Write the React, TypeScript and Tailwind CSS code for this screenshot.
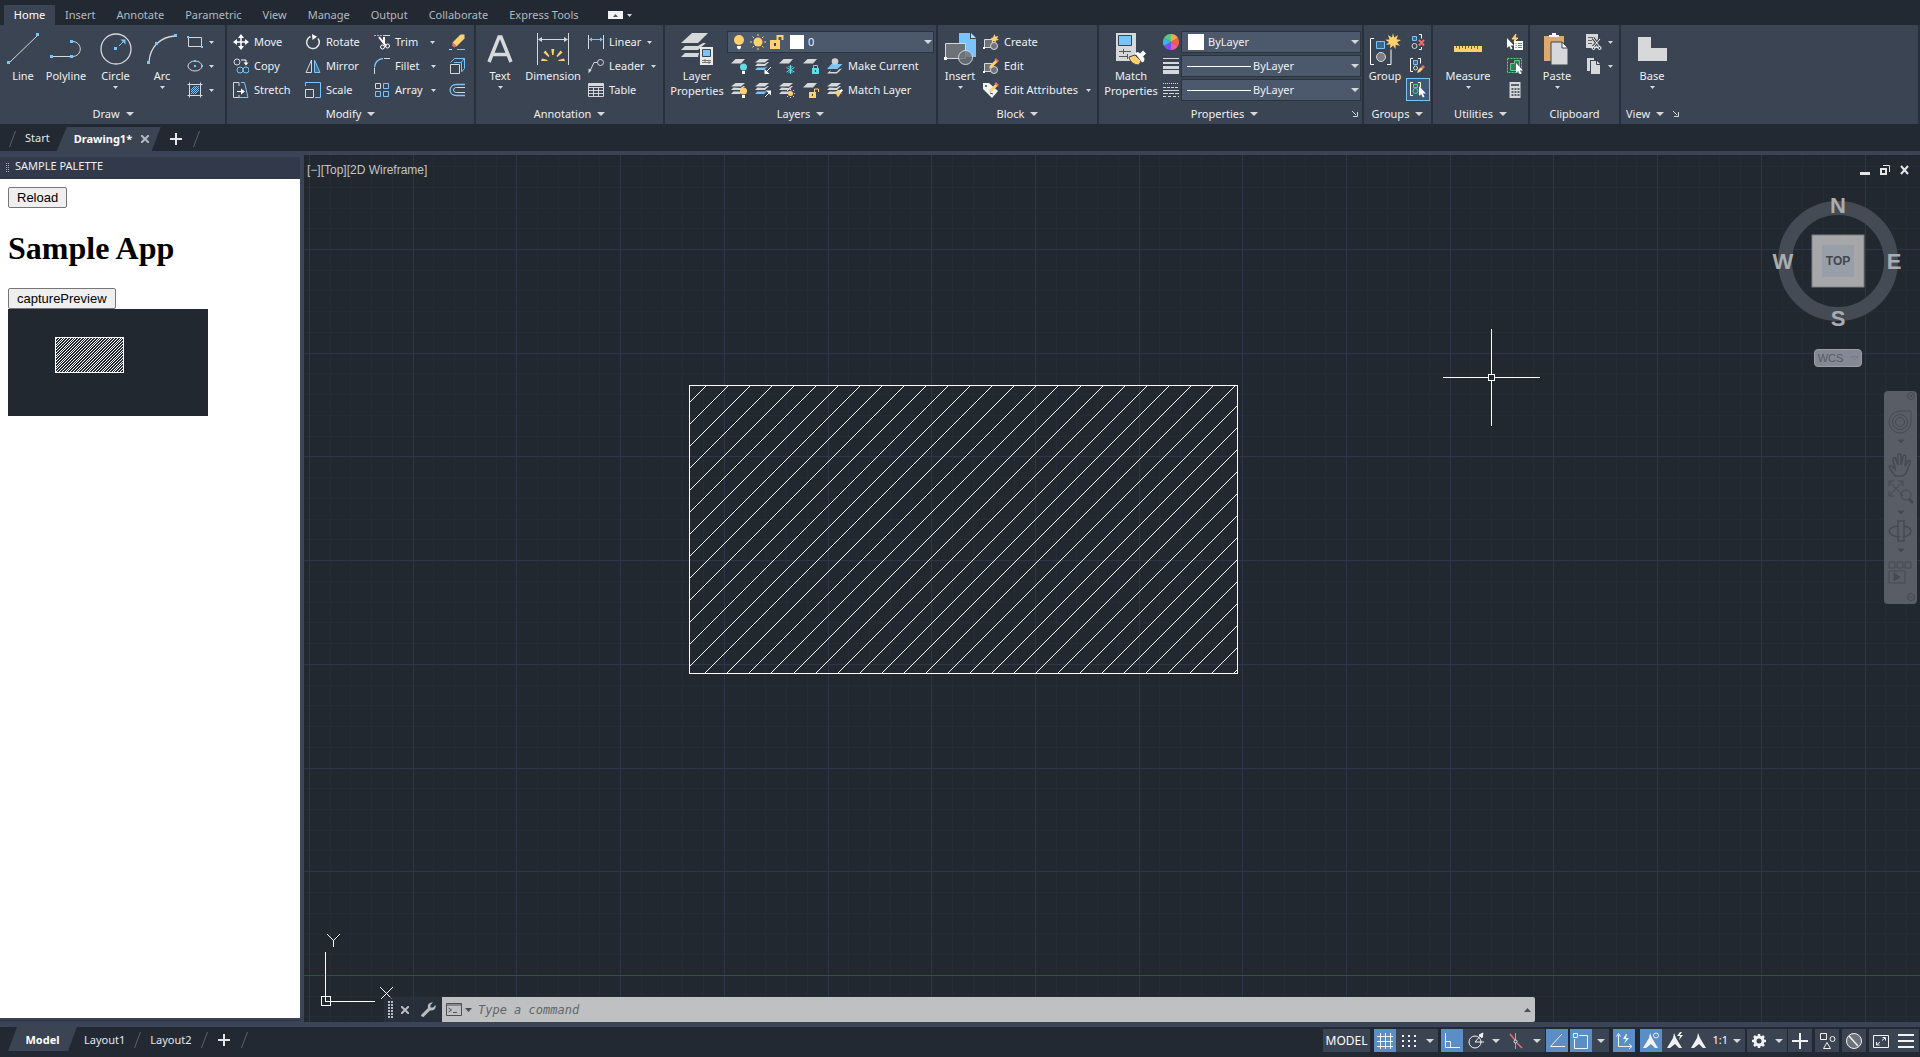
import React, { ReactNode } from "react";

const G = "#d6d8da";
const B = "#78c4fb";
const Y = "#ffd070";
const R = "#f26a6a";
const D = "#3b4453";

function Ic({ s = 16, children }: { s?: 16 | 32; children: ReactNode }) {
  return (
    <svg
      className="shrink-0"
      width={s}
      height={s}
      viewBox={s === 32 ? "0 0 32 32" : "0 0 16 16"}
      fill="none"
      stroke={G}
      aria-hidden="true"
    >
      {children}
    </svg>
  );
}

function Caret({ big = false }: { big?: boolean }) {
  return big ? (
    <svg className="shrink-0" width="8" height="4" viewBox="0 0 8 4" aria-hidden="true">
      <path d="M0 0h8L4 4z" fill={G} />
    </svg>
  ) : (
    <svg className="shrink-0" width="5" height="3" viewBox="0 0 5 3" aria-hidden="true">
      <path d="M0 0h5L2.500 3z" fill={G} />
    </svg>
  );
}

function Sq({ x, y, s = 3, c = B }: { x: number; y: number; s?: number; c?: string }) {
  return <rect x={x} y={y} width={s} height={s} fill={c} stroke="none" />;
}

/* ---------- draw icons ---------- */
const LineIcon = () => (
  <Ic s={32}>
    <path d="M2 30 31 2" />
    <Sq x={0} y={28} /> <Sq x={29} y={0} />
  </Ic>
);
const PolylineIcon = () => (
  <Ic s={32}>
    <path d="M2 23.500h20M22 8.500c11 0 11 15 0 15" />
    <Sq x={0} y={22} /> <Sq x={20} y={22} /> <Sq x={20} y={7} />
  </Ic>
);
const CircleIcon = () => (
  <Ic s={32}>
    <circle cx="16" cy="16" r="15" strokeWidth="1.300" />
    <path d="M19 13l4-4" stroke={B} />
    <path d="M25.500 6.500v5l-5-5z" fill={B} stroke="none" />
    <Sq x={14} y={14} />
  </Ic>
);
const ArcIcon = () => (
  <Ic s={32}>
    <path d="M3 29C4 14 14 4 29 3" strokeWidth="1.300" />
    <Sq x={1} y={28} /> <Sq x={9} y={9} /> <Sq x={28} y={1} />
  </Ic>
);
const RectIcon = () => (
  <Ic>
    <path d="M1.500 3.500h13v9h-13z" />
    <Sq x={0} y={2} s={2} /> <Sq x={14} y={12} s={2} />
  </Ic>
);
const EllipseIcon = () => (
  <Ic>
    <ellipse cx="8" cy="8" rx="7" ry="5" />
    <Sq x={7} y={7} s={2} /> <Sq x={7} y={2} s={2} /> <Sq x={14} y={7} s={2} />
  </Ic>
);
const HatchIcon = () => (
  <Ic>
    <path d="M.5 2.500h15M.5 13.500h15M2.500.5v15M13.500.5v15" />
    <path d="M4 8l4-4M4 12l8-8M8 12l4-4M4 10l6-6M6 12l6-6" stroke={B} />
  </Ic>
);

/* ---------- modify icons ---------- */
const MoveIcon = () => (
  <Ic>
    <path d="M8 2v12M2 8h12" strokeWidth="1.500" stroke="#fff" />
    <path d="M8 0l3 4H5zM8 16l3-4H5zM0 8l4-3v6zM16 8l-4-3v6z" fill="#fff" stroke="none" />
  </Ic>
);
const CopyIcon = () => (
  <Ic>
    <circle cx="4" cy="4" r="3" />
    <path d="M8 2h5v3" stroke="#fff" />
    <path d="M10.500 4.500h5l-2.500 3z" fill="#fff" stroke="none" />
    <circle cx="7" cy="12" r="3" stroke={B} />
    <circle cx="13" cy="12" r="3" stroke={B} />
  </Ic>
);
const StretchIcon = () => (
  <Ic>
    <path d="M6 4V.5H.5v15H6V13" />
    <path d="M8 .5h3.500l3.500 15H6" stroke={B} />
    <path d="M4 9.500h6" stroke="#fff" />
    <path d="M8 6.500l4 3-4 3z" fill="#fff" stroke="none" />
  </Ic>
);
const RotateIcon = () => (
  <Ic>
    <path d="M5.500 2.500A6.300 6.300 0 1 0 13 4.500" stroke="#e8e8e8" strokeWidth="1.500" />
    <path d="M7 0l5 2.800L7.500 6z" fill="#fff" stroke="none" />
  </Ic>
);
const MirrorIcon = () => (
  <Ic>
    <path d="M6.500 2v12.500H1z" />
    <path d="M9.500 2v12.500H15z" stroke={B} fill="#3f6f98" />
  </Ic>
);
const ScaleIcon = () => (
  <Ic>
    <path d="M3 .5h12.500v15H10M.5 4V.5H3" stroke={B} />
    <path d="M.5 7.500h8v8h-8z" />
  </Ic>
);
const TrimIcon = () => (
  <Ic>
    <path d="M0 1.500h8" stroke={B} strokeDasharray="2 1" />
    <path d="M9 1.500h7" />
    <path d="M5 3l7 9M10 3v7" stroke="#fff" strokeWidth="2" />
    <circle cx="8.500" cy="13" r="2" stroke="#fff" />
    <circle cx="13.500" cy="12" r="2" stroke="#fff" />
  </Ic>
);
const FilletIcon = () => (
  <Ic>
    <path d="M.5 9.500C1 4 4 1 9 .5" stroke={B} strokeWidth="1.300" />
    <path d="M10 .5h6M.5 10v6" />
  </Ic>
);
const ArrayIcon = () => (
  <Ic>
    <path d="M1.500 1.500h5v5h-5z" />
    <path d="M9.500 1.500h5v5h-5zM1.500 9.500h5v5h-5zM9.500 9.500h5v5h-5z" stroke={B} />
  </Ic>
);
const EraseIcon = () => (
  <Ic>
    <path d="M15.500.5v4l-8 8-4-4 8-8z" fill={Y} stroke="none" />
    <path d="M4 9l3 3c-1.500 2-4.500 0-3-3z" fill={R} stroke={R} />
    <path d="M0 15.500h3" />
    <path d="M8 15.500h8" stroke={B} />
  </Ic>
);
const ExplodeIcon = () => (
  <Ic>
    <path d="M1.500 6.500h9v9h-9z" />
    <path d="M1.500 4.500l4-4h10v10l-3 3.500M12.500 4l3-3.500M5 4.500h7.500v9" stroke={B} />
  </Ic>
);
const OffsetIcon = () => (
  <Ic>
    <path d="M16 2.500H7.500c-8.500 0-8.500 11 0 11H16" stroke={B} strokeWidth="1.300" />
    <path d="M16 5.500H7.500c-4 0-4 5 0 5H16" />
  </Ic>
);

/* ---------- annotation icons ---------- */
const TextIcon = () => (
  <Ic s={32}>
    <path d="M5 29 15 4h2l10 25M8 21.500h16" strokeWidth="3.500" />
  </Ic>
);
const DimensionIcon = () => (
  <Ic s={32}>
    <path d="M.5 0v32M31.500 0v32M3 6.500h26" />
    <path d="M1 6.500l4-2.500v5zM31 6.500L27 4v5z" fill={G} stroke="none" />
    <path
      d="M14.300 16h3l-.8 6h-1.400zM6.500 19.500l2-2 4 5.500-1 1zM25.500 19.500l-2-2-4 5.500 1 1zM4 28l1-2.500 5.500 1.500v1zM28 28l-1-2.500-5.500 1.500v1z"
      fill={Y}
      stroke="none"
    />
  </Ic>
);
const LinearIcon = () => (
  <Ic>
    <path d="M.5 1v14M15.500 1v14" />
    <path d="M2 5.500h12" stroke={B} />
    <path d="M1 5.500l3-2v4zM15 5.500l-3-2v4z" fill={B} stroke="none" />
  </Ic>
);
const LeaderIcon = () => (
  <Ic>
    <circle cx="12.500" cy="4.500" r="3" />
    <path d="M9.500 4.500H6L1.500 14" />
    <path d="M.5 15.500v-5l3 1.500z" fill={G} stroke="none" />
  </Ic>
);
const TableIcon = () => (
  <Ic>
    <path d="M.5 1.500h15v13H.5zM.5 5.500h15M.5 8.500h15M.5 11.500h15M5.500 5v9M10.500 5v9" />
    <path d="M1 2h14v2H1z" fill={G} stroke="none" />
  </Ic>
);

/* ---------- layer icons ---------- */
const LayerPropsIcon = () => (
  <Ic s={32}>
    <path d="M11 0h16L17 10H0zM4 13l-4 4h17l8-7h-3l-5 3zM4 20l-4 4h17l1-4z" fill={G} stroke="none" />
    <path d="M19 14h13v18H19z" fill="#e9e9e9" stroke="none" />
    <path d="M21.500 16.500h8v7h-8z" fill={B} stroke={D} />
    <path d="M21 27.500h9M21 29.500h9M24 26v3M28 28v3" stroke="#777" />
  </Ic>
);
const Sheets = ({ mid = G }: { mid?: string }) => (
  <>
    <path d="M4.500 1H14l-4 3.500H0z" fill={G} stroke="none" />
    <path d="M2.500 5.500 0 8h10l4-4h-1.500L9.500 6z" fill={G} stroke="none" />
    <path d="M2.500 9.500 0 12h9l4-4-3 1.500z" fill={mid} stroke="none" />
  </>
);
const OneSheet = () => <path d="M4.500 1H14l-4 4.500H0z" fill={G} stroke="none" />;
const Bulb = ({ c }: { c: string }) => (
  <>
    <circle cx="12.500" cy="9" r="3.500" fill={c} stroke="none" />
    <path d="M11 13h3v3h-3z" fill="#fff" stroke="none" />
  </>
);
const LayOff = () => <Ic><OneSheet /><Bulb c="#62dbe8" /></Ic>;
const LayIso = () => (
  <Ic><Sheets mid={B} /><path d="M16 9l-5 5" stroke="#fff" /><path d="M9.500 11v5h5z" fill="#fff" stroke="none" /></Ic>
);
const LayFreeze = () => (
  <Ic><OneSheet /><path d="M11.500 7v9M7.500 9.500l8 4.500M15.500 9.500l-8 4.500M9.500 8l2 2 2-2M9.500 15l2-2 2 2" stroke="#62dbe8" /></Ic>
);
const LayLock = () => (
  <Ic><OneSheet /><path d="M9 10h7v6H9z" fill="#62dbe8" stroke="none" /><path d="M10.500 10V7.500h4V10" stroke="#62dbe8" /><path d="M12.500 12v2" stroke={D} /></Ic>
);
const MakeCurrent = () => (
  <Ic>
    <path d="M4 12l-4 3.500h10l5-5-2.500.5-3 3H3z" fill={G} stroke="none" />
    <path d="M4.500 6H15.500l-5 5H0z" fill={B} stroke="none" />
    <circle cx="8" cy="3.500" r="3.300" fill="#cfcfcf" stroke="none" />
  </Ic>
);
const LayOn = () => <Ic><Sheets /><Bulb c={Y} /></Ic>;
const LayUniso = () => (
  <Ic><Sheets mid={B} /><path d="M10 15l4-4" stroke="#fff" /><path d="M11 8.500h5v5z" fill="#fff" stroke="none" /></Ic>
);
const LayThaw = () => (
  <Ic><Sheets /><circle cx="11.500" cy="11.500" r="2.500" fill={Y} stroke="none" /><path d="M11.500 6.500V8M11.500 15v1.500M6.500 11.500H8M15 11.500h1.500M8 8l1 1M15 8l-1 1M8 15l1-1M15 15l-1-1" stroke={Y} /></Ic>
);
const LayUnlock = () => (
  <Ic><OneSheet /><path d="M6 10h7v6H6z" fill={Y} stroke="none" /><path d="M11.500 10V7h4v3" stroke={Y} /><path d="M9.500 12v2" stroke={D} /></Ic>
);
const MatchLayer = () => (
  <Ic><Sheets /><path d="M8 10l3-2 3 3-3 4.500z" fill={Y} stroke="none" /><path d="M10.500 7.500l2 1 2-1.500 1.500 1.500-2 2 1 2z" fill="#fff" stroke="none" /></Ic>
);
const BulbIcon = () => (
  <Ic><circle cx="8" cy="6" r="5" fill={Y} stroke="none" /><path d="M6 12h4v2l-2 1.500L6 14z" fill="#fff" stroke="none" /></Ic>
);
const SunIcon = () => (
  <Ic><circle cx="8" cy="8" r="4.500" fill={Y} stroke="none" /><path d="M8 0v2M8 14v2M0 8h2M14 8h2M2.500 2.500L4 4M13.500 2.500L12 4M2.500 13.500L4 12M13.500 13.500L12 12" stroke={Y} /></Ic>
);
const UnlockIcon = () => (
  <Ic><path d="M1 6h10v9H1z" fill={Y} stroke="none" /><path d="M8.500 6V2h5v4" stroke={Y} strokeWidth="2" /><path d="M6 9v3" stroke={D} strokeWidth="2" /></Ic>
);

/* ---------- block icons ---------- */
const InsertIcon = () => (
  <Ic s={32}>
    <path d="M15 0h11v6h6v18H15z" fill={B} stroke="none" />
    <path d="M27 0l5 5h-5z" fill="#b5defc" stroke="none" />
    <path d="M1.500 10.500h20v15h-20z" fill="#6d7278" />
    <circle cx="21.500" cy="24.500" r="7" fill="#6d7278" fillOpacity=".8" />
    <Sq x={0} y={24} c="#fff" />
  </Ic>
);
const BlockBase = () => (
  <>
    <path d="M1.500 5.500h8v8h-8z" fill="#6d7278" />
    <circle cx="11" cy="12" r="3.500" fill="#6d7278" />
    <Sq x={0} y={13} s={2} c="#fff" />
  </>
);
const Pencil = () => (
  <>
    <path d="M13 1.500l2 2-6 6-3 1 1-3z" fill={Y} stroke="none" />
    <path d="M13 0l3 3-1.500 1.500-3-3z" fill={R} stroke="none" />
  </>
);
const CreateIcon = () => (
  <Ic><BlockBase /><path d="M11.500 0l1 2.800 3-1-1.500 2.700 2 1.500-3 .5-.5 2.500-1.500-2-2.500 1 1-2.500-2-1.500 2.500-.5z" fill={Y} stroke="none" /></Ic>
);
const EditIcon = () => <Ic><BlockBase /><Pencil /></Ic>;
const AttrIcon = () => (
  <Ic><path d="M0 1h6l9 8-6 7-9-9z" fill="#f2f2f2" stroke="none" /><circle cx="3" cy="4" r="1" fill={D} stroke="none" /><path d="M7 11l3 1" stroke={D} /><Pencil /></Ic>
);

/* ---------- property icons ---------- */
const MatchPropsIcon = () => (
  <Ic s={32}>
    <path d="M1 0h20v28H1z" fill={G} stroke="none" />
    <path d="M3.500 2.500h13v10h-13z" fill={B} stroke={D} />
    <path d="M4 18.500h12M4 23.500h9M8.500 16v5M12.500 21v5" stroke="#555" />
    <path d="M14 24l6-2 6 6-2 4c-5 0-9-3-10-8z" fill={Y} stroke={D} />
    <path d="M20 20l3-1 2 1.500 3-3 3 3-3 3 1.500 2-.5 3-2 1z" fill="#fff" stroke="none" />
  </Ic>
);
const WheelIcon = () => (
  <Ic>
    <g stroke="none">
      <path d="M8 8V0a8 8 0 0 1 7 4z" fill="#f8a54c" />
      <path d="M8 8l7-4a8 8 0 0 1 0 8z" fill="#f0604d" />
      <path d="M8 8l7 4a8 8 0 0 1-7 4z" fill="#ef5a9a" />
      <path d="M8 8v8a8 8 0 0 1-7-4z" fill="#7c4dff" />
      <path d="M8 8l-7 4a8 8 0 0 1 0-8z" fill="#3bb3e8" />
      <path d="M8 8L1 4a8 8 0 0 1 7-4z" fill="#58c97a" />
    </g>
  </Ic>
);
const WeightIcon = () => (
  <Ic><path d="M0 .5h16" /><path d="M0 5h16" strokeWidth="2" /><path d="M0 9.500h16" strokeWidth="3" /><path d="M0 14h16" strokeWidth="4" /></Ic>
);
const TypeIcon = () => (
  <Ic>
    <path d="M0 1.500h16" strokeDasharray="1 1" />
    <path d="M0 5.500h16" strokeDasharray="3 1" />
    <path d="M0 8.500h16" />
    <path d="M0 11.500h16" strokeDasharray="5 1" />
    <path d="M0 14.500h16" strokeDasharray="3 2" />
  </Ic>
);

/* ---------- group icons ---------- */
const Star = () => (
  <path d="M24 0l1.200 4.500L29 2l-1.500 4.200 4.500.8-4 2.300 3 3.500-4.300-1L26.500 16 24 12.500 21 15.500l.3-4.200L17 12l3-3-4-2.200 4.500-.3L19 2l4 2.500z" fill={Y} stroke="none" />
);
const GroupIcon = () => (
  <Ic s={32}>
    <path d="M5 5.500H1.500v26H5M18 31.500h4v-15" stroke="#fff" />
    <path d="M7.500 8.500h8v7h-8z" stroke={B} fill="#40668a" />
    <circle cx="12" cy="24" r="4.500" fill="#7b7f85" />
    <Star />
  </Ic>
);
const Cursor = ({ x, y }: { x: number; y: number }) => (
  <path d={`M${x} ${y}v10l2.200-2 1.600 3.500 1.700-.8-1.600-3.300h3z`} fill="#fff" stroke="none" />
);
const UngroupIcon = () => (
  <Ic><path d="M2.500 2.500h4v4h-4z" stroke={B} fill="#40668a" /><circle cx="4.500" cy="12" r="2.500" /><path d="M9 .5h2.500v4M9 15.500h2.500V13" stroke="#fff" /><path d="M9 6l5 5.500M14 6l-5 5.500" stroke={R} strokeWidth="2" /></Ic>
);
const GroupEditIcon = () => (
  <Ic><path d="M3 .5H.5v13H3M8 .5h2.500v5" stroke="#fff" /><path d="M3.500 2.500h4v4h-4z" stroke={B} fill="#40668a" /><circle cx="5.500" cy="10" r="2" /><path d="M7 15l1-3 3-3 2 2-3 3z" fill={Y} stroke="none" /><path d="M11 9l2-2 2 2-2 2z" fill={R} stroke="none" /></Ic>
);
const GroupSelIcon = () => (
  <Ic><path d="M3 .5H.5v13H3M8 .5h2.500v5" stroke="#fff" /><path d="M3.500 2.500h4v3h-4z" stroke="#53d68a" /><circle cx="5.500" cy="9" r="2.500" stroke="#53d68a" /><Cursor x={9} y={4} /></Ic>
);

/* ---------- utilities, clipboard, view ---------- */
const RulerIcon = () => (
  <Ic s={32}><path d="M2 13h28v6H2z" fill={Y} stroke="none" /><path d="M4.500 13v2M7.500 13v3M10.500 13v2M13.500 13v3M16.500 13v2M19.500 13v3M22.500 13v2M25.500 13v3" stroke="#6f6545" /></Ic>
);
const QuickSelIcon = () => (
  <Ic><path d="M9 0L5 5h3l-1 3 4-4H8z" fill={Y} stroke={Y} /><Cursor x={0} y={4} /><path d="M7 7h9v9H7z" fill="#fff" stroke="none" /><path d="M8.500 9.500h1M8.500 11.500h1M8.500 13.500h1M11 9.500h4M11 11.500h4M11 13.500h4" stroke="#3988cc" /></Ic>
);
const SelAllIcon = () => (
  <Ic><path d="M.5.5h14v14H.5z" stroke="#53d68a" strokeDasharray="2 1" /><path d="M3.500 5.500h4v-3h5v7h-3v3h-6z" stroke="#53d68a" fill="#3d7a5c" /><Cursor x={9} y={5} /></Ic>
);
const CalcIcon = () => (
  <Ic><path d="M2.500 0h11v16h-11z" fill={G} stroke="none" /><path d="M5.500 6v9M8.500 6v9M11.500 6v9" stroke="#5a606a" strokeWidth="2" strokeDasharray="2 1" /><path d="M4 3h8" stroke="#5a606a" strokeWidth="2" /></Ic>
);
const PasteIcon = () => (
  <Ic s={32}><path d="M3 3h20v25H3z" fill="#dcaa6c" stroke="none" /><path d="M8 4V2h3V0h4v2h3v2z" fill="#fff" stroke="none" /><path d="M10 9h11l6 6v17H10z" fill={G} stroke={D} /><path d="M21 9v6h6z" fill="#fff" stroke={D} /></Ic>
);
const CutIcon = () => (
  <Ic><path d="M0 0h12v14H0z" fill={G} stroke="none" /><path d="M2 3.500h5M2 6.500h4M2 9.500h4" stroke="#666" /><path d="M7 4l7 9M14 5l-7 8" stroke={D} strokeWidth="3" /><path d="M7 4l7 9M14 5l-7 8" stroke="#fff" /><circle cx="7.500" cy="14" r="1.500" stroke="#fff" /><circle cx="13.500" cy="14" r="1.500" stroke="#fff" /></Ic>
);
const CopyClipIcon = () => (
  <Ic><path d="M1 0h7v2H4v11H1z" fill={G} stroke="none" /><path d="M5 3h6l3 3v10H5z" fill={G} stroke="none" /><path d="M10.500 3v3.500H14" stroke={D} /></Ic>
);
const BaseIcon = () => <Ic s={32}><path d="M2 4h13v11h16v13H2z" fill={G} stroke="none" /></Ic>;

/* ---------- ribbon building blocks ---------- */
function Panel({ title, width, children, caret = true, launcher = false, left = false }: {
  title: string; width: string; children: ReactNode; caret?: boolean; launcher?: boolean; left?: boolean;
}) {
  return (
    <section className={`flex flex-col border-r-2 border-[#28303b] pt-[5px] ${width}`}>
      <div className="flex h-[74px]">{children}</div>
      <div className={`relative flex h-5 items-center ${left ? "pl-[5px]" : launcher ? "justify-center pr-3" : "justify-center"}`}>
        <button type="button" className="flex items-center gap-[6px]">
          {title}
          {caret && <Caret big />}
        </button>
        {launcher && (
          <button
            type="button"
            aria-label={`${title} settings`}
            className={left ? "ml-[9px]" : "absolute right-1"}
          >
            <svg width="6" height="6" viewBox="0 0 6 6" aria-hidden="true">
              <path d="M0 0l4 4" stroke={G} />
              <path d="M5.500 1v4.500H1" stroke={G} fill="none" />
            </svg>
          </button>
        )}
      </div>
    </section>
  );
}

function Big({ icon, label, width, caret = false }: { icon: ReactNode; label: string; width: string; caret?: boolean }) {
  return (
    <button type="button" className={`flex shrink-0 flex-col items-center pt-[3px] ${width}`}>
      {icon}
      <span className="mt-[3px] text-center leading-[15px] whitespace-pre">{label}</span>
      {caret && <span className="mt-[3px]"><Caret /></span>}
    </button>
  );
}

function Row({ icon, label, gap = "ml-3" }: { icon: ReactNode; label: string; gap?: string }) {
  const hasCaret = gap !== "none";
  return (
    <button type="button" className="flex h-6 items-center whitespace-nowrap">
      {icon}
      <span className="ml-[5px]">{label}</span>
      {hasCaret && <span className={gap}><Caret /></span>}
    </button>
  );
}

function IconBtn({ icon, label, caret = false }: { icon: ReactNode; label: string; caret?: boolean }) {
  return (
    <button type="button" aria-label={label} className="flex h-6 items-center gap-[6px]">
      {icon}
      {caret && <Caret />}
    </button>
  );
}

function Combo({ label, value, pre }: { label: string; value: string; pre?: ReactNode }) {
  return (
    <div className="relative flex h-[22px] w-full items-center border border-[#2b333f] bg-[#4c586b]">
      {pre}
      <select aria-label={label} defaultValue={value} className="h-full min-w-0 flex-1 appearance-none bg-transparent pr-5 outline-none">
        <option>{value}</option>
      </select>
      <span className="pointer-events-none absolute right-[1px] flex"><Caret big /></span>
    </div>
  );
}

const LinePreview = () => <span className="mr-[2px] ml-[5px] h-px w-16 bg-white" />;

function Ribbon() {
  return (
    <div className="flex h-[99px] shrink-0 bg-[#3b4453] pl-[1px] text-[#eef0f2]">
      <Panel title="Draw" width="w-[226px]">
        <div className="flex pl-[2px]">
          <Big icon={<LineIcon />} label="Line" width="w-10" />
          <Big icon={<PolylineIcon />} label="Polyline" width="w-[46px]" />
          <Big icon={<CircleIcon />} label="Circle" width="w-[53px]" caret />
          <Big icon={<ArcIcon />} label="Arc" width="w-[40px]" caret />
        </div>
        <div className="ml-[5px]">
          <IconBtn icon={<RectIcon />} label="Rectangle" caret />
          <IconBtn icon={<EllipseIcon />} label="Ellipse" caret />
          <IconBtn icon={<HatchIcon />} label="Hatch" caret />
        </div>
      </Panel>

      <Panel title="Modify" width="w-[249px]">
        <div className="w-[78px] pl-[6px]">
          <Row icon={<MoveIcon />} label="Move" gap="none" />
          <Row icon={<CopyIcon />} label="Copy" gap="none" />
          <Row icon={<StretchIcon />} label="Stretch" gap="none" />
        </div>
        <div className="w-[69px]">
          <Row icon={<RotateIcon />} label="Rotate" gap="none" />
          <Row icon={<MirrorIcon />} label="Mirror" gap="none" />
          <Row icon={<ScaleIcon />} label="Scale" gap="none" />
        </div>
        <div className="w-[75px]">
          <Row icon={<TrimIcon />} label="Trim" />
          <Row icon={<FilletIcon />} label="Fillet" />
          <Row icon={<ArrayIcon />} label="Array" gap="ml-2" />
        </div>
        <div>
          <IconBtn icon={<EraseIcon />} label="Erase" />
          <IconBtn icon={<ExplodeIcon />} label="Explode" />
          <IconBtn icon={<OffsetIcon />} label="Offset" />
        </div>
      </Panel>

      <Panel title="Annotation" width="w-[189px]">
        <Big icon={<TextIcon />} label="Text" width="w-12" caret />
        <Big icon={<DimensionIcon />} label="Dimension" width="w-[58px]" />
        <div className="ml-[6px]">
          <Row icon={<LinearIcon />} label="Linear" gap="ml-[6px]" />
          <Row icon={<LeaderIcon />} label="Leader" gap="ml-[6px]" />
          <Row icon={<TableIcon />} label="Table" gap="none" />
        </div>
      </Panel>

      <Panel title="Layers" width="w-[273px]">
        <Big icon={<LayerPropsIcon />} label={"Layer\nProperties"} width="w-[62px] pl-[2px]" />
        <div className="flex-1 pr-[2px]">
          <div className="flex h-6 items-center">
            <Combo
              label="Current layer"
              value="0"
              pre={
                <span className="mr-1 flex items-center gap-[3px] pl-[3px]">
                  <BulbIcon /><SunIcon /><UnlockIcon />
                  <span className="ml-[2px] size-[14px] bg-white" />
                </span>
              }
            />
          </div>
          <div className="flex gap-2 pl-1">
            <IconBtn icon={<LayOff />} label="Layer off" />
            <IconBtn icon={<LayIso />} label="Isolate layer" />
            <IconBtn icon={<LayFreeze />} label="Freeze layer" />
            <IconBtn icon={<LayLock />} label="Lock layer" />
            <Row icon={<MakeCurrent />} label="Make Current" gap="none" />
          </div>
          <div className="flex gap-2 pl-1">
            <IconBtn icon={<LayOn />} label="All layers on" />
            <IconBtn icon={<LayUniso />} label="Unisolate layer" />
            <IconBtn icon={<LayThaw />} label="Thaw layers" />
            <IconBtn icon={<LayUnlock />} label="Unlock layer" />
            <Row icon={<MatchLayer />} label="Match Layer" gap="none" />
          </div>
        </div>
      </Panel>

      <Panel title="Block" width="w-[161px]">
        <Big icon={<InsertIcon />} label="Insert" width="w-[44px]" caret />
        <div className="ml-[1px]">
          <Row icon={<CreateIcon />} label="Create" gap="none" />
          <Row icon={<EditIcon />} label="Edit" gap="none" />
          <Row icon={<AttrIcon />} label="Edit Attributes" gap="ml-2" />
        </div>
      </Panel>

      <Panel title="Properties" width="w-[265px]" launcher>
        <Big icon={<MatchPropsIcon />} label={"Match\nProperties"} width="w-16" />
        <div className="grid h-[72px] flex-1 grid-cols-[16px_1fr] items-center gap-x-[2px] pr-[1px]">
          <WheelIcon />
          <Combo label="Object colour" value="ByLayer" pre={<span className="mr-1 ml-[6px] size-4 bg-white" />} />
          <WeightIcon />
          <Combo label="Lineweight" value="ByLayer" pre={<LinePreview />} />
          <TypeIcon />
          <Combo label="Linetype" value="ByLayer" pre={<LinePreview />} />
        </div>
      </Panel>

      <Panel title="Groups" width="w-[69px]">
        <Big icon={<GroupIcon />} label="Group" width="w-[42px]" />
        <div className="w-6">
          <span className="flex justify-center"><IconBtn icon={<UngroupIcon />} label="Ungroup" /></span>
          <span className="flex justify-center"><IconBtn icon={<GroupEditIcon />} label="Group edit" /></span>
          <button type="button" aria-label="Group selection" className="flex h-[23px] w-6 items-center justify-center border border-[#78c4fb] bg-[#3e5a78]">
            <GroupSelIcon />
          </button>
        </div>
      </Panel>

      <Panel title="Utilities" width="w-[97px]">
        <Big icon={<RulerIcon />} label="Measure" width="w-[70px]" caret />
        <div className="ml-1">
          <IconBtn icon={<QuickSelIcon />} label="Quick select" />
          <IconBtn icon={<SelAllIcon />} label="Select all" />
          <IconBtn icon={<CalcIcon />} label="Calculator" />
        </div>
      </Panel>

      <Panel title="Clipboard" width="w-[91px]" caret={false}>
        <Big icon={<PasteIcon />} label="Paste" width="w-[54px]" caret />
        <div className="ml-[2px]">
          <IconBtn icon={<CutIcon />} label="Cut" caret />
          <IconBtn icon={<CopyClipIcon />} label="Copy clip" caret />
        </div>
      </Panel>

      <Panel title="View" width="flex-1" launcher left>
        <Big icon={<BaseIcon />} label="Base" width="w-[62px]" caret />
      </Panel>
    </div>
  );
}

function MenuTabs() {
  const tabs = ["Insert", "Annotate", "Parametric", "View", "Manage", "Output", "Collaborate", "Express Tools"];
  return (
    <nav className="flex h-[25px] shrink-0 items-end pl-1 text-[#b4b9c0]">
      <button type="button" className="h-5 w-[51px] bg-[#3b4453] text-white">Home</button>
      <div className="ml-[10px] flex h-5 gap-[21px]">
        {tabs.map((t) => (
          <button key={t} type="button" className="whitespace-nowrap">{t}</button>
        ))}
      </div>
      <button type="button" aria-label="Ribbon display" className="ml-[29px] flex h-5 items-center gap-1">
        <svg width="15" height="8" viewBox="0 0 15 8" aria-hidden="true">
          <path d="M0 0h15v8H0z" fill="#f2f2f2" />
          <path d="M5 6l2.500-3L10 6z" fill="#555" />
        </svg>
        <Caret />
      </button>
    </nav>
  );
}

const Slash = () => (
  <svg className="shrink-0" width="7" height="16" viewBox="0 0 7 16" aria-hidden="true">
    <path d="M.5 16 6.500 0" stroke="#5a626e" />
  </svg>
);
const Plus = () => (
  <svg width="12" height="12" viewBox="0 0 12 12" aria-hidden="true">
    <path d="M6 0v12M0 6h12" stroke="#e6e6e6" strokeWidth="2" />
  </svg>
);

function FileTabs() {
  return (
    <div className="flex h-[27px] shrink-0 items-center pt-[2px] pl-[9px] text-[#e4e6e8]">
      <Slash />
      <button type="button" className="ml-[9px]">Start</button>
      <div className="relative ml-[7px] flex h-6 w-[104px] items-center self-end pl-[17px]">
        <span className="absolute inset-0 bg-[#3b4453] [clip-path:polygon(10px_0,100%_0,calc(100%-9px)_100%,0_100%)]" />
        <button type="button" className="relative font-bold text-white">Drawing1*</button>
        <button type="button" aria-label="Close drawing" className="absolute right-[12px]">
          <svg width="8" height="8" viewBox="0 0 8 8" aria-hidden="true"><path d="M0 0l8 8M8 0L0 8" stroke="#b4b9c0" strokeWidth="2" /></svg>
        </button>
      </div>
      <button type="button" aria-label="New drawing" className="ml-[9px]"><Plus /></button>
      <span className="ml-[11px]"><Slash /></span>
    </div>
  );
}

function HatchLines({ x, y, w, h, first, step }: { x: number; y: number; w: number; h: number; first: number; step: number }) {
  const segs: string[] = [];
  for (let v = first; v < w + h; v += step) {
    const s = Math.round(v);
    const x1 = s < h ? 0 : s - h;
    const y1 = s < h ? s : h;
    const x2 = s < w ? s : w;
    const y2 = s < w ? 0 : s - w;
    segs.push(`M${x + x1} ${y + y1}L${x + x2} ${y + y2}`);
  }
  return <path d={segs.join("")} />;
}

function Palette() {
  const btn = "rounded-[2px] border border-[#767676] bg-[#efefef] h-[21px] px-2 text-[13px] text-black font-['Liberation_Sans',Arial,sans-serif]";
  return (
    <aside className="flex w-[300px] shrink-0 flex-col">
      <div className="mt-[2px] flex h-[22px] items-center gap-[6px] rounded-tr-[3px] bg-[#31394a] pb-1 pl-[6px] text-[#eef0f2]">
        <svg className="mt-[2px]" width="3" height="9" viewBox="0 0 3 9" aria-hidden="true">
          <path d="M.5 0v9M2.500 0v9" stroke="#a8adb5" strokeDasharray="1 1" />
        </svg>
        SAMPLE PALETTE
      </div>
      <div className="flex flex-1 flex-col items-start bg-white p-2">
        <button type="button" className={btn}>Reload</button>
        <h1 className="my-[21px] font-['Liberation_Serif','Times_New_Roman',serif] text-[32px] leading-[38px] font-bold text-black">Sample App</h1>
        <button type="button" className={btn}>capturePreview</button>
        <svg width="200" height="107" viewBox="0 0 200 107" role="img" aria-label="Drawing preview" shapeRendering="crispEdges">
          <path d="M0 0h200v107H0z" fill="#21282f" />
          <g stroke="#fff" fill="none">
            <rect x="47.500" y="28.500" width="68" height="35" />
            <HatchLines x={47.5} y={28.5} w={68} h={35} first={2} step={2.77} />
          </g>
        </svg>
      </div>
      <div className="h-[9px] border-t-2 border-[#3b4456] pb-[6px]"><div className="h-px bg-[#2b3340]" /></div>
    </aside>
  );
}

const GRID = 103.7;

function DrawingArea() {
  const minor: string[] = [];
  const major: string[] = [];
  for (let k = -2; k < 160; k++) {
    const x = Math.round(5 + (k * GRID) / 5) + 0.5;
    (k % 5 === 0 ? major : minor).push(`M${x} 0V3000`);
  }
  for (let k = 0; k < 110; k++) {
    const y = Math.round(94 - GRID + (k * GRID) / 5) + 0.5;
    (k % 5 === 0 ? major : minor).push(`M0 ${y}H4000`);
  }
  return (
    <svg className="absolute inset-0 h-full w-full" shapeRendering="crispEdges" fill="none" role="img" aria-label="Model space">
      <path d={minor.join("")} stroke="#252c37" />
      <path d={major.join("")} stroke="#2f364a" />
      <path d="M0 820.500H4000" stroke="#8e2430" />
      <g stroke="#fff">
        <rect x="385.500" y="230.500" width="548" height="288" />
        <HatchLines x={385.5} y={230.5} w={548} h={288} first={17} step={22.03} />
        <path d="M1139 222.500h45M1191 222.500h45M1187.500 174v45M1187.500 226v45" />
        <rect x="1184.500" y="219.500" width="6" height="6" />
        <path d="M21.500 797v50M21 846.500h50M17.500 841.500h9v9h-9z" />
        <path d="M23.500 779.500l6 6 6-6M29.500 786v6M76.500 832.500l12 12M88.500 832.500l-12 12" />
      </g>
    </svg>
  );
}

function ViewCube() {
  return (
    <div className="absolute top-[32px] right-[16px] flex w-[132px] flex-col items-center">
      <svg width="132" height="150" viewBox="0 -6 132 150" role="img" aria-label="View cube">
        <circle cx="66" cy="68" r="53" fill="none" stroke="#454b54" strokeWidth="14" />
        <rect x="40" y="42" width="52" height="52" fill="#a5a7a9" stroke="#7c8085" />
        <rect x="50" y="52" width="32" height="32" fill="#999fa8" />
        <g className="font-['Liberation_Sans',Arial,sans-serif] font-bold" textAnchor="middle" fill="#a9adb0">
          <text x="66" y="72" fontSize="12" fill="#42474e">TOP</text>
          <text x="66" y="20" fontSize="22">N</text>
          <text x="66" y="133" fontSize="22">S</text>
          <text x="11" y="76" fontSize="22">W</text>
          <text x="122" y="76" fontSize="22">E</text>
        </g>
      </svg>
      <button type="button" className="mt-3 flex h-[18px] w-12 items-center justify-center gap-2 rounded-[4px] border border-[#9a9da6] bg-[#858994] text-[11px] text-[#555a66] font-['Liberation_Sans',Arial,sans-serif]">
        WCS
        <svg width="7" height="4" viewBox="0 0 7 4" fill="none" aria-hidden="true"><path d="M0 .5h7L3.500 3.500z" stroke="#777c88" /></svg>
      </button>
    </div>
  );
}

function NavBar() {
  return (
    <div className="absolute top-[236px] right-[3px] h-[213px] w-[33px] rounded-[4px] bg-[#585d66]">
      <svg width="33" height="213" viewBox="0 0 33 213" fill="none" stroke="#454a52" role="img" aria-label="Navigation tools">
        <circle cx="27" cy="5" r="3.500" /><path d="M25.500 3.500l3 3M28.500 3.500l-3 3" />
        <path d="M16 20h11v11a11 11 0 1 1-11-11z" /><circle cx="16" cy="31" r="7.500" /><circle cx="16" cy="31" r="4.500" />
        <path d="M14 49h6l-3 3z" fill="#454a52" />
        <path d="M11 85l-5-7c-2-4 1-4 3-2l2 2-2-9c0-3 3-3 3 0l2 5V65c0-3 3-3 3 0v9l2-8c1-3 3-2 3 0l-1 9 3-5c2-2 3 0 2 2l-4 10-3 3z" strokeWidth="1.500" />
        <path d="M5 90l14 15M19 90L5 105M5 95v-5h5M14 90h5v5M5 100v5h5" />
        <circle cx="22" cy="104" r="5" /><path d="M25 108l4 4" strokeWidth="2.500" />
        <path d="M14 120h6l-3 3z" fill="#454a52" />
        <path d="M14 130h6v20h-6zM14 135c-12 1-12 10 2 11M20 135c10 2 9 9-1 11" strokeWidth="1.500" />
        <path d="M14 158h6l-3 3z" fill="#454a52" />
        <path d="M5 171h6v6H5zM13 171h6v6h-6zM21 171h6v6h-6zM5 180h16v12H5z" />
        <path d="M10 182l6 4-6 4z" fill="#454a52" />
        <circle cx="27" cy="206" r="3.500" /><path d="M25 206h4" />
      </svg>
    </div>
  );
}

function CommandBar() {
  return (
    <div className="absolute right-[385px] bottom-0 left-[80px] flex h-[25px]">
      <div className="flex w-[58px] items-center bg-[#2b323f]/70 pl-1">
        <svg width="5" height="17" viewBox="0 0 5 17" aria-hidden="true"><path d="M1 0v17M4 0v17" stroke="#b8bbc0" strokeWidth="2" strokeDasharray="2 1" /></svg>
        <button type="button" aria-label="Close command line" className="ml-[8px]">
          <svg width="8" height="8" viewBox="0 0 8 8" aria-hidden="true"><path d="M0 0l8 8M8 0L0 8" stroke="#b8bbc0" strokeWidth="2" /></svg>
        </button>
        <button type="button" aria-label="Customize" className="ml-[12px]">
          <svg width="15" height="15" viewBox="0 0 15 15" aria-hidden="true">
            <path d="M0 13l7-7C6 3 8 0 12 .5L9.500 3v2.500H12L14.500 3c1 4-2 6-5.500 5.500l-6.500 6.500C1 15 0 14 0 13z" fill="#b8bbc0" />
          </svg>
        </button>
      </div>
      <div className="flex flex-1 items-center rounded-r-[2px] bg-[#bfc0c2] pr-[4px] pl-1">
        <button type="button" aria-label="Recent commands" className="flex items-center gap-[3px]">
          <svg width="16" height="13" viewBox="0 0 16 13" fill="none" stroke="#4b4e52" aria-hidden="true">
            <path d="M.5.5h15v12H.5zM.5 2h15" /><path d="M2.500 5l3 2-3 2M7 9.500h4" />
          </svg>
          <svg width="7" height="4" viewBox="0 0 7 4" aria-hidden="true"><path d="M0 0h7L3.500 4z" fill="#4b4e52" /></svg>
        </button>
        <input
          aria-label="Command"
          placeholder="Type a command"
          className="ml-[6px] min-w-0 flex-1 bg-transparent font-['DejaVu_Sans_Mono',monospace] text-[12px] italic outline-none placeholder:text-[#62656a]"
        />
        <button type="button" aria-label="Command history">
          <svg width="7" height="4" viewBox="0 0 7 4" aria-hidden="true"><path d="M0 4h7L3.500 0z" fill="#4b4e52" /></svg>
        </button>
      </div>
    </div>
  );
}

function Viewport() {
  return (
    <main className="relative my-0 ml-1 flex-1 overflow-hidden bg-[#21282f]">
      <DrawingArea />
      <button type="button" className="absolute top-[7px] left-[3px] font-['Liberation_Sans',Arial,sans-serif] text-[12px] leading-4 text-[#c2c5c9]">
        [−][Top][2D Wireframe]
      </button>
      <div className="absolute top-[10px] right-[11px] flex items-end gap-[10px]">
        <button type="button" aria-label="Minimize"><svg width="10" height="10" viewBox="0 0 10 10" aria-hidden="true"><path d="M0 8.500h10" stroke="#e6e6e6" strokeWidth="3" /></svg></button>
        <button type="button" aria-label="Restore"><svg width="10" height="10" viewBox="0 0 10 10" fill="none" stroke="#e6e6e6" aria-hidden="true"><path d="M1 4h5v5H1z" strokeWidth="2" /><path d="M3 .5h6.500V7" /></svg></button>
        <button type="button" aria-label="Close"><svg width="9" height="10" viewBox="0 0 9 10" aria-hidden="true"><path d="M1 1l7 8M8 1L1 9" stroke="#e6e6e6" strokeWidth="2" /></svg></button>
      </div>
      <ViewCube />
      <NavBar />
      <CommandBar />
    </main>
  );
}

/* ---------- status bar ---------- */
function SB({ label, on = false, w = "w-[22px]", children }: { label: string; on?: boolean; w?: string; children: ReactNode }) {
  return (
    <button type="button" aria-label={label} className={`flex h-full items-center justify-center ${w} ${on ? "bg-[#5b8dc6]" : "bg-[#3b4453]"}`}>
      {children}
    </button>
  );
}
const StatusCaret = ({ w = "w-5" }: { w?: string }) => (
  <SB label="Options" w={w}><Caret big /></SB>
);
const SI = ({ children }: { children: ReactNode }) => (
  <svg className="shrink-0" width="18" height="18" viewBox="0 0 18 18" fill="none" stroke="#f2f2f2" aria-hidden="true">{children}</svg>
);
const Person = () => <path d="M8 1l2 5 6 10h-3l-4-4-5 4H1l6-10z" fill="#f2f2f2" stroke="none" />;

function StatusBar() {
  return (
    <footer className="flex h-[30px] shrink-0 items-start bg-[#222933] pl-2 text-[#e4e6e8]">
      <div className="flex h-[26px] items-center">
        <div className="relative flex h-[26px] w-[69px] items-center justify-center">
          <span className="absolute inset-x-0 top-0 h-6 bg-[#3b4453] [clip-path:polygon(9px_0,100%_0,calc(100%-9px)_100%,0_100%)]" />
          <button type="button" className="relative font-bold text-white">Model</button>
        </div>
        <button type="button" className="ml-[7px]">Layout1</button>
        <span className="ml-[9px]"><Slash /></span>
        <button type="button" className="ml-[9px]">Layout2</button>
        <span className="ml-[9px]"><Slash /></span>
        <button type="button" aria-label="New layout" className="ml-[10px]"><Plus /></button>
        <span className="ml-[11px]"><Slash /></span>
      </div>

      <div className="mt-[2px] ml-auto flex h-[23px] pr-[1px]">
        <button type="button" className="mr-1 w-[47px] bg-[#3b4453] text-[12px] text-white">MODEL</button>
        <SB label="Grid" on><SI><path d="M1 4.500h16M1 9.500h16M1 14.500h16M4.500 1v16M9.500 1v16M14.500 1v16" /></SI></SB>
        <SB label="Snap" w="w-[26px]"><SI><path d="M2 4h14M2 9h14M2 14h14" strokeWidth="2" strokeDasharray="2 4" /></SI></SB>
        <StatusCaret w="w-4" />
        <span className="w-[3px]" />
        <SB label="Ortho" on><SI><path d="M2.500 1v14.500H17M2.500 9.500h5v6" /></SI></SB>
        <SB label="Polar" w="w-[26px]"><SI><circle cx="8" cy="10" r="6" /><path d="M8 10h9M8 10l7-8" /><path d="M16 1l-1 5-3-3z" fill="#f2f2f2" /></SI></SB>
        <StatusCaret w="w-[14px]" />
        <SB label="Isodraft" w="w-[26px]"><SI><path d="M3 2l5 6M10 11l5 5" stroke={R} strokeWidth="1.500" /><path d="M8.500 1v16" stroke="#6cc58a" /><circle cx="8.500" cy="9.500" r="1.500" fill={D} /></SI></SB>
        <StatusCaret w="w-[16px]" />
        <span className="w-[1px]" />
        <SB label="Object snap tracking" on><SI><path d="M14 2L2.500 14.500H17" /></SI></SB>
        <span className="w-[2px]" />
        <SB label="Object snap" on><SI><path d="M1.500 1.500h4v4h-4z" /><path d="M7 3.500h8.500v13h-13V7" /></SI></SB>
        <StatusCaret w="w-[17px]" />
        <span className="w-[4px]" />
        <SB label="Dynamic UCS" on><SI><path d="M3.500 3v11.500H16M1.500 4.500l2-3 2 3M14 12l3 2.500-3 2.500" /><path d="M11 2L8 7h3l-2 5 5-6h-3l1-4z" fill="#f2f2f2" stroke="none" /></SI></SB>
        <span className="w-[5px]" />
        <SB label="Annotation visibility" on><SI><Person /><circle cx="14" cy="3.500" r="2.500" /></SI></SB>
        <SB label="Auto scale" w="w-[26px]"><SI><Person /><path d="M14 0l-3 4h3l-1 4 4-5h-3l2-3z" fill="#f2f2f2" stroke="none" /></SI></SB>
        <SB label="Annotation scale" w="w-[22px]"><SI><Person /></SI></SB>
        <button type="button" className="flex w-[35px] items-center justify-end gap-[5px] bg-[#3b4453] pr-1 text-white">1:1 <Caret big /></button>
        <span className="w-[2px]" />
        <SB label="Workspace" w="w-6">
          <SI><circle cx="9" cy="9" r="4" strokeWidth="3" /><path d="M9 2v3M9 13v3M2 9h3M13 9h3M4 4l2 2M12 12l2 2M4 14l2-2M12 6l2-2" strokeWidth="2.500" /></SI>
        </SB>
        <StatusCaret w="w-4" />
        <span className="w-[1px]" />
        <SB label="Annotation monitor" w="w-6"><SI><path d="M9 1v16M1 9h16" strokeWidth="2" /></SI></SB>
        <span className="w-[3px]" />
        <SB label="Isolate objects" w="w-6"><SI><path d="M2.500 1.500h6v6h-6zM9 10.500l3.500 6h-7z" /><circle cx="14.500" cy="7" r="2.500" /></SI></SB>
        <span className="w-[3px]" />
        <SB label="Hardware acceleration" w="w-6"><SI><circle cx="9" cy="9" r="7.500" fill="#6d737c" /><path d="M4 4l9 10" strokeWidth="1.500" /></SI></SB>
        <span className="w-[3px]" />
        <SB label="Clean screen" w="w-6"><SI><path d="M1.500 3.500h15v12h-15z" /><path d="M5 12.500l3-2.500M10 8.500l3-2.500M4.500 10v3h3M10.500 5.500h3v3" /></SI></SB>
        <SB label="Customization" w="w-[26px]"><SI><path d="M1 3h16M1 9h16M1 15h16" strokeWidth="2" /></SI></SB>
      </div>
    </footer>
  );
}

export default function App() {
  return (
    <div className="flex h-screen flex-col overflow-hidden bg-[#222933] font-['Noto_Sans',sans-serif] text-[11px]">
      <MenuTabs />
      <Ribbon />
      <FileTabs />
      <div className="flex min-h-0 flex-1 flex-col border-t-4 border-[#3b4456] bg-[#3b4456]">
        <div className="flex min-h-0 flex-1">
          <Palette />
          <div className="flex flex-1 pb-[5px]"><Viewport /></div>
        </div>
      </div>
      <StatusBar />
    </div>
  );
}
